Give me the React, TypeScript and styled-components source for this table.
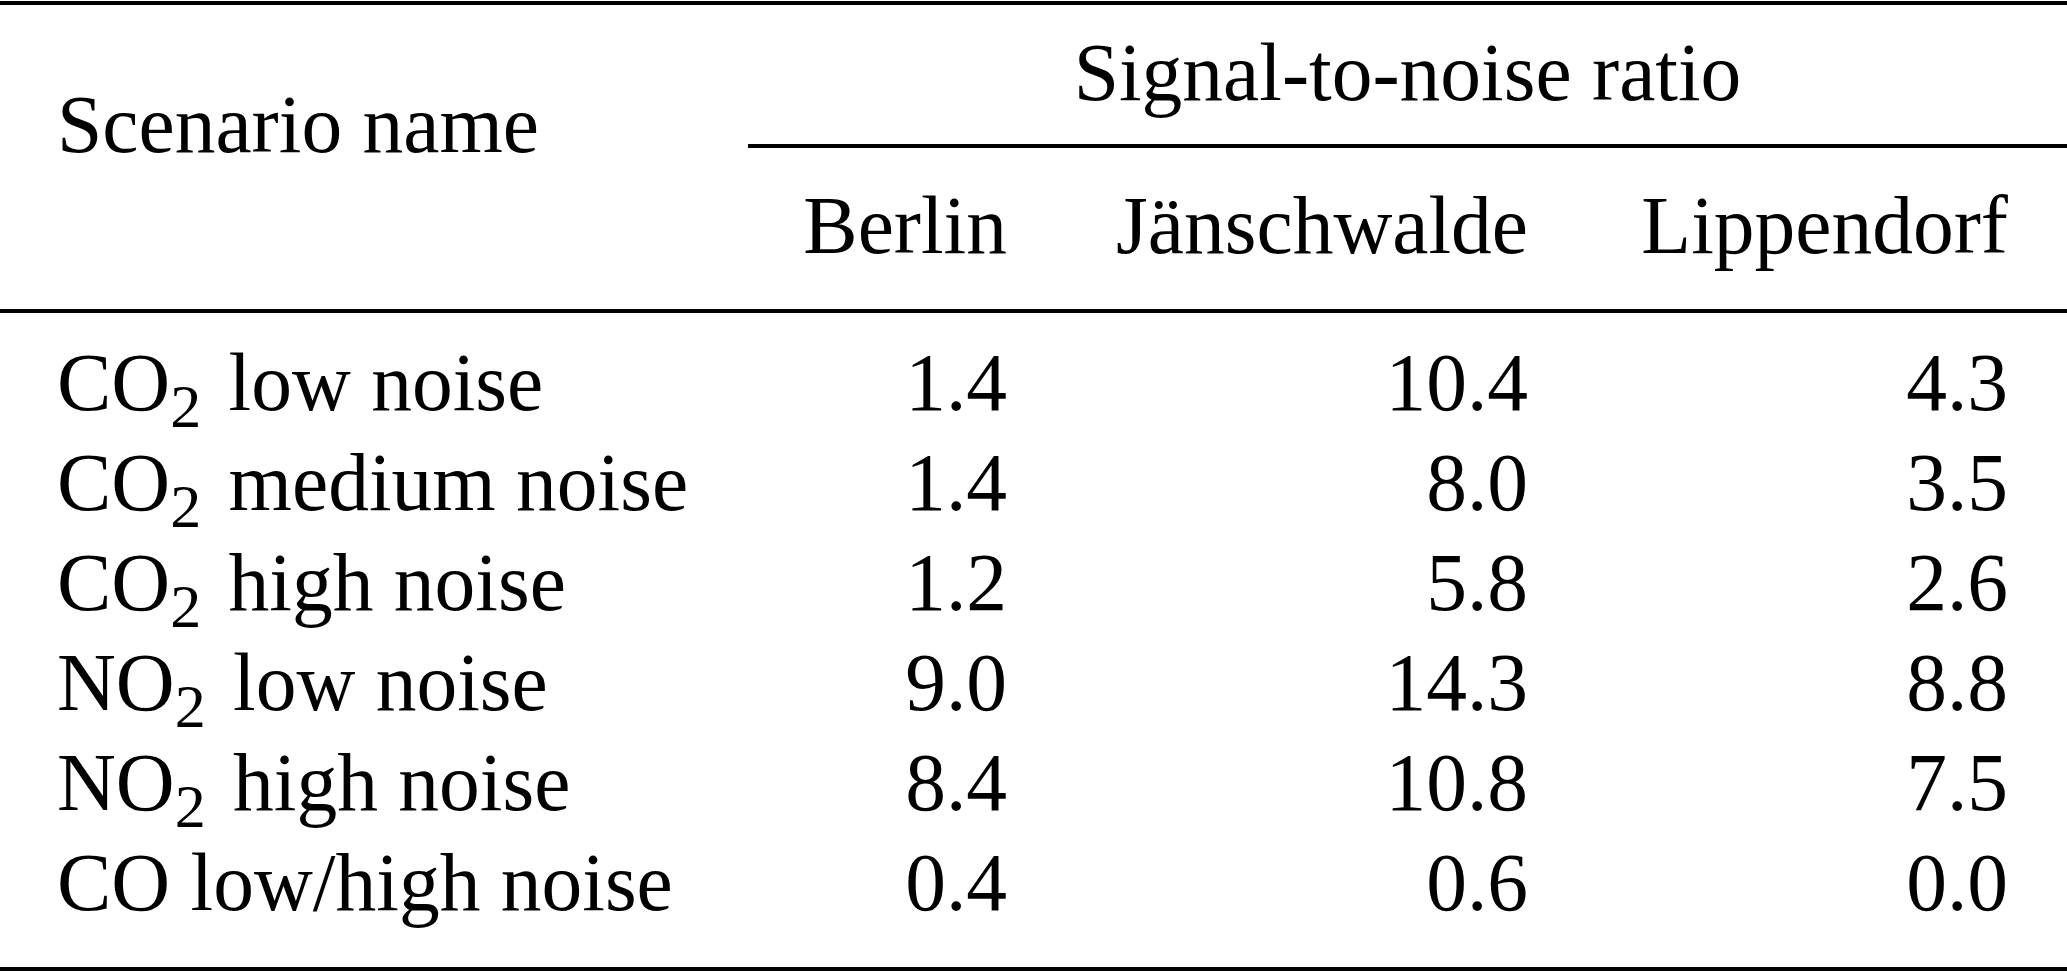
import { createGlobalStyle, styled } from "styled-components";

const GlobalStyle = createGlobalStyle`
  html, body {
    margin: 0;
    padding: 0;
    background: #ffffff;
  }
  body {
    font-family: "Liberation Serif", "Times New Roman", serif;
    color: #000000;
  }
`;

const Table = styled.table`
  width: 2067px;
  table-layout: fixed;
  border-collapse: separate;
  border-spacing: 0;
  margin-top: 1px;
  border-top: 4px solid #000;
  border-bottom: 4px solid #000;
  font-family: "Liberation Serif", "Times New Roman", serif;
  font-size: 81.5px;
  line-height: 100px;
  font-weight: normal;
  color: #000;
`;

const Col = styled.col<{ $w: number }>`
  width: ${(p) => p.$w}px;
`;

const NameHead = styled.th`
  vertical-align: top;
  text-align: left;
  font-weight: normal;
  padding: 69.5px 0 0 57px;
  border-bottom: 4px solid #000;
  white-space: nowrap;
`;

const GroupHead = styled.th`
  text-align: center;
  font-weight: normal;
  padding: 17.5px 0 21.5px 0;
  border-bottom: 4px solid #000;
  white-space: nowrap;
`;

const ColHead = styled.th`
  text-align: right;
  font-weight: normal;
  padding: 27.5px 59px 33.5px 0;
  border-bottom: 4px solid #000;
  white-space: nowrap;
`;

type Pos = "first" | "middle" | "last";

const padTop = (p: Pos) => (p === "first" ? "19.5px" : "0");
const padBottom = (p: Pos) => (p === "last" ? "34.5px" : "0");

const NameCell = styled.td<{ $pos: Pos }>`
  text-align: left;
  padding: ${(p) => padTop(p.$pos)} 0 ${(p) => padBottom(p.$pos)} 57px;
  white-space: nowrap;
`;

const ValueCell = styled.td<{ $pos: Pos }>`
  text-align: right;
  padding: ${(p) => padTop(p.$pos)} 59px ${(p) => padBottom(p.$pos)} 0;
  white-space: nowrap;
`;

// chemical subscript, kept out of the line box so rows stay 100px
const Sub = styled.span`
  font-size: 62px;
  line-height: 0;
  vertical-align: -17px;
  margin-right: 7px;
`;

type Row = {
  gas: string;
  sub?: string;
  label: string;
  values: string[];
};

const rows: Row[] = [
  { gas: "CO", sub: "2", label: "low noise", values: ["1.4", "10.4", "4.3"] },
  { gas: "CO", sub: "2", label: "medium noise", values: ["1.4", "8.0", "3.5"] },
  { gas: "CO", sub: "2", label: "high noise", values: ["1.2", "5.8", "2.6"] },
  { gas: "NO", sub: "2", label: "low noise", values: ["9.0", "14.3", "8.8"] },
  { gas: "NO", sub: "2", label: "high noise", values: ["8.4", "10.8", "7.5"] },
  { gas: "CO", label: "low/high noise", values: ["0.4", "0.6", "0.0"] },
];

const sites = ["Berlin", "Jänschwalde", "Lippendorf"];
const colWidths = [748, 318, 521, 480];

function App() {
  return (
    <>
      <GlobalStyle />
      <Table>
        <colgroup>
          {colWidths.map((w, i) => (
            <Col key={i} $w={w} />
          ))}
        </colgroup>
        <thead>
          <tr>
            <NameHead rowSpan={2}>Scenario name</NameHead>
            <GroupHead colSpan={3}>Signal-to-noise ratio</GroupHead>
          </tr>
          <tr>
            {sites.map((s) => (
              <ColHead key={s}>{s}</ColHead>
            ))}
          </tr>
        </thead>
        <tbody>
          {rows.map((r, i) => {
            const pos: Pos =
              i === 0 ? "first" : i === rows.length - 1 ? "last" : "middle";
            return (
              <tr key={i}>
                <NameCell $pos={pos}>
                  {r.gas}
                  {r.sub && <Sub>{r.sub}</Sub>} {r.label}
                </NameCell>
                {r.values.map((v, j) => (
                  <ValueCell key={j} $pos={pos}>
                    {v}
                  </ValueCell>
                ))}
              </tr>
            );
          })}
        </tbody>
      </Table>
    </>
  );
}

export default App;
